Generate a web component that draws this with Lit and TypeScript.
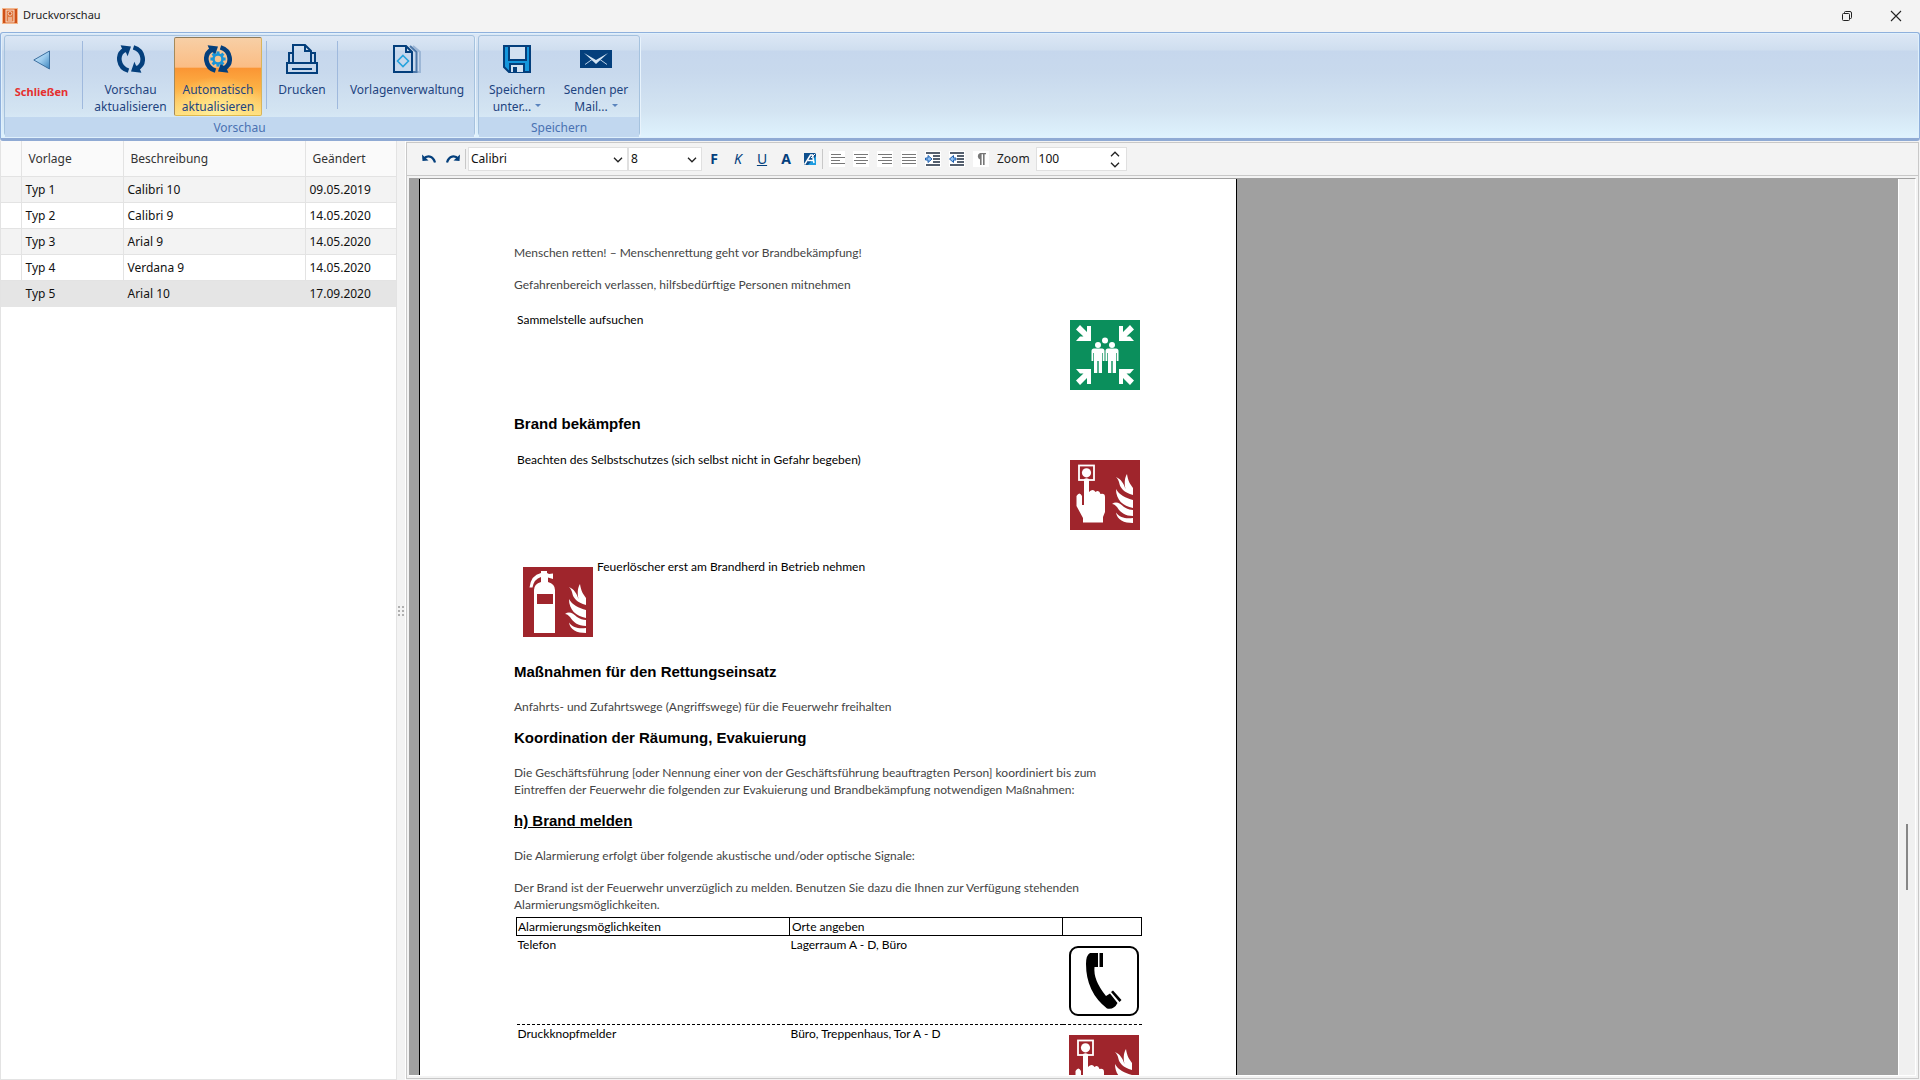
import { LitElement, html, css, svg, nothing, type TemplateResult } from "lit";
import { customElement, property, state } from "lit/decorators.js";
import { classMap } from "lit/directives/class-map.js";

/* ---------- Ribbon icons ---------- */

const refreshArrows = svg`
  <g fill="none" stroke="#043f7c" stroke-width="4.6">
    <path d="M11.5 25.6 C1 22.5 -1 9 8.2 4.6"/>
    <path d="M16.5 2.4 C27 5.500 29 19 19.800 23.400"/>
  </g>
  <path fill="#043f7c" d="M3.600 0.200 L14 1.400 L10.600 11.200 L9 7.400 L5.800 5.400 Z"/>
  <path fill="#043f7c" d="M24.400 27.800 L14 26.600 L17.400 16.800 L19 20.600 L22.200 22.600 Z"/>`;

const gearTeeth = [0, 45, 90, 135, 180, 225, 270, 315];

const iconClose = html`<svg width="18" height="20" viewBox="0 0 18 20" aria-hidden="true">
  <defs><linearGradient id="tri" x1="0" y1="0" x2="1" y2="1">
    <stop offset="0" stop-color="#d6ecfb"/><stop offset=".5" stop-color="#9ccbee"/><stop offset="1" stop-color="#3d85bd"/>
  </linearGradient></defs>
  <path d="M16.500 1 V19 L0.800 10 Z" fill="url(#tri)" stroke="#3c6f9f" stroke-width="1"/>
</svg>`;

const iconRefresh = html`<svg width="28" height="28" viewBox="0 0 28 28" aria-hidden="true">${refreshArrows}</svg>`;

const iconAuto = html`<svg width="28" height="28" viewBox="0 0 28 28" aria-hidden="true">
  ${refreshArrows}
  <circle cx="14" cy="14" r="4.500" fill="#f7c48d" stroke="#1b95d8" stroke-width="2.600"/>
  ${gearTeeth.map((a) => svg`<rect x="12.500" y="6.400" width="3" height="3" fill="#1b95d8" transform="rotate(${a} 14 14)"/>`)}
</svg>`;

const iconPrint = html`<svg width="32" height="30" viewBox="0 0 32 30" aria-hidden="true">
  <g fill="none" stroke="#043f7c" stroke-width="2">
    <path d="M1 19 H31 V29 H1 Z"/><path d="M6 25 H26"/>
    <path d="M7 19 V1 H19 L25 7 V19"/><path d="M19 1 V7 H25"/>
    <path d="M3 19 V9 H7 M29 19 V9 H25"/>
  </g>
</svg>`;

const iconTemplates = html`<svg width="28" height="28" viewBox="0 0 28 28" aria-hidden="true">
  <g fill="none" stroke-width="2">
    <path d="M20 1 L27 7 V27 H23" stroke="#9db7d6"/>
    <path d="M17 1 L23.500 7 V27 H19" stroke="#4e79aa"/>
    <path d="M1 1 H13 L19 7 V27 H1 Z" stroke="#043f7c"/>
    <path d="M13 1 V7 H19" stroke="#043f7c"/>
    <path d="M10 10.500 L15.500 16 L10 21.500 L4.500 16 Z" stroke="#27a3dd" stroke-width="1.600"/>
  </g>
</svg>`;

const iconSave = html`<svg width="28" height="28" viewBox="0 0 28 28" aria-hidden="true">
  <path d="M1 1 H27 V27 H6 L1 22 Z" fill="#1496dc" stroke="#043f7c" stroke-width="2"/>
  <rect x="6" y="1" width="17" height="14" fill="#d3e1f1" stroke="#043f7c" stroke-width="2"/>
  <path d="M7 27 V19 H21 V27" fill="#d3e1f1" stroke="#043f7c" stroke-width="2"/>
  <rect x="10" y="22" width="4" height="5" fill="#043f7c"/>
</svg>`;

const iconMail = html`<svg width="32" height="18" viewBox="0 0 32 18" aria-hidden="true">
  <rect width="32" height="18" fill="#043f7c"/>
  <path d="M4 3 L16 14 L28 3 L16 10 Z" fill="#d3e3f2"/>
  <path d="M5 14.500 L12 9.500 M27 14.500 L20 9.500" fill="none" stroke="#b8cfe6" stroke-width="1"/>
</svg>`;

/* ---------- Toolbar icons ---------- */

const iconUndo = html`<svg width="16" height="10" viewBox="0 0 16 10" aria-hidden="true">
  <path d="M2.500 5 C6 1 12 1.500 14 8.500" fill="none" stroke="#043f7c" stroke-width="2.200"/>
  <path d="M1 0.500 L1.500 7 L7.500 6.500 Z" fill="#043f7c"/>
</svg>`;
const iconRedo = html`<svg width="16" height="10" viewBox="0 0 16 10" aria-hidden="true">
  <path d="M13.500 5 C10 1 4 1.500 2 8.500" fill="none" stroke="#043f7c" stroke-width="2.200"/>
  <path d="M15 0.500 L14.500 7 L8.500 6.500 Z" fill="#043f7c"/>
</svg>`;
const iconHighlight = html`<svg width="12" height="12" viewBox="0 0 12 12" aria-hidden="true">
  <rect width="12" height="12" fill="#0d4f8e"/><path d="M12 3 V12 H4 Z" fill="#1c9ce0"/>
  <path d="M0.500 11.500 L6.500 2 H8.500 L10 10 M4 7.500 H9.500" fill="none" stroke="#fff" stroke-width="1.500"/>
  <path d="M7 5 L11.500 0.500" stroke="#fff" stroke-width="1"/>
</svg>`;

const lines = (rows: [number, number][]) => html`<svg width="16" height="16" viewBox="0 0 16 16" aria-hidden="true">
  <rect width="16" height="16" fill="#fff"/>
  ${rows.map(([x, w], i) => svg`<rect x=${x} y=${3 + i * 3} width=${w} height="1" fill="#777"/>`)}
</svg>`;
const iconLeft = lines([[2, 10], [2, 14], [2, 9], [2, 14]]);
const iconCenter = lines([[1, 14], [3, 10], [1, 14], [3, 10]]);
const iconRight = lines([[1, 14], [5, 10], [1, 14], [5, 10]]);
const iconJustify = lines([[1, 14], [1, 14], [1, 14], [1, 14]]);

const indent = (arrow: string) => html`<svg width="16" height="16" viewBox="0 0 16 16" aria-hidden="true">
  <rect width="16" height="16" fill="#fff"/>
  <path d="M1 2 H15 M8 5 H15 M8 8 H15 M8 11 H15 M1 14 H15" stroke="#1d2b3f" stroke-width="1.400"/>
  <path d=${arrow} fill="#8fc0f2" stroke="#1f5fae" stroke-width="1"/>
</svg>`;
const iconIndent = indent("M0.500 7 H3 V4.500 L7 8 L3 11.500 V9 H0.500 Z");
const iconOutdent = indent("M7 7 H4.500 V4.500 L0.500 8 L4.500 11.500 V9 H7 Z");
const iconPilcrow = html`<svg width="16" height="16" viewBox="0 0 16 16" aria-hidden="true">
  <rect width="16" height="16" fill="#fff"/>
  <path d="M7 8.500 A3.500 3.500 0 0 1 7 2 H13 V3.200 H11.600 V14 H10 V3.200 H8.600 V14 H7 Z" fill="#777"/>
</svg>`;
const chevronDown = html`<svg class="chevron" width="10" height="6" viewBox="0 0 10 6" aria-hidden="true">
  <path d="M1 0.800 L5 4.800 L9 0.800" fill="none" stroke="#222" stroke-width="1.300"/></svg>`;
const chevronUp = html`<svg width="10" height="6" viewBox="0 0 10 6" aria-hidden="true">
  <path d="M1 5.200 L5 1.200 L9 5.200" fill="none" stroke="#222" stroke-width="1.300"/></svg>`;

/* ---------- Safety signs ---------- */

const flames = svg`<g fill="#fff">
  <path d="M46 17 C51 19 54 24 55.500 29 C54 22 55 17 57 14 C58 21 60 24 63 28 V35 C54 33 50 27 49.500 24 C49 21 48 19 46 17 Z"/>
  <path d="M46 29 C49 35 56 38 63 40 V48 C53 46 46 40 46 29 Z"/>
  <path d="M42 44 C46 41 50 43 54 47 C57 49 60 50 63 50 V56 C55 56 50 52 47 47 C45 45 44 44 42 44 Z"/>
  <path d="M46 52.500 C50 58 56 59 63 58 V63 C54 63 47 60 46 52.500 Z"/>
</g>`;

const signAssembly = html`<svg class="sign" viewBox="0 0 70 70" role="img" aria-label="Sammelstelle">
  <rect width="70" height="70" fill="#0b8f5c"/>
  <g fill="#fff">
    ${[
      "",
      "translate(70 0) scale(-1 1)",
      "translate(0 70) scale(1 -1)",
      "translate(70 70) scale(-1 -1)",
    ].map((t) => svg`<path transform=${t} d="M10 5 L17 12 V6 H21 V21 H6 L10 16.500 H13.500 L6 9.500 Z"/>`)}
    <circle cx="35" cy="20.500" r="3"/>
    <circle cx="28" cy="25" r="3"/>
    <circle cx="42" cy="25" r="3"/>
    ${[28, 42].map((x) => svg`<path transform="translate(${x} 0)" d="M-4 28.500 H4 Q6.500 28.500 6.500 31 V41 H4.700 V33 H4 V53 H0.700 V41 H-0.700 V53 H-4 V33 H-4.700 V41 H-6.500 V31 Q-6.500 28.500 -4 28.500 Z"/>`)}
  </g>
</svg>`;

const signAlarm = html`<svg class="sign" viewBox="0 0 70 70" role="img" aria-label="Brandmelder">
  <rect width="70" height="70" fill="#9f252c"/>
  <rect x="9" y="5.500" width="15" height="14.500" fill="none" stroke="#fff" stroke-width="1.800"/>
  <circle cx="16.500" cy="12.800" r="4.600" fill="#fff"/>
  <path fill="#fff" d="M14 19 Q16.500 17.500 19 19 V32 Q23 28 25.500 32 Q29 29.500 30.500 34 Q35 33 35 37 V52 L33 57 V62.500 H13 V58 L6.500 46 V36 Q9.500 31 12 36 V45 H14 Z"/>
  ${flames}
</svg>`;

const signExtinguisher = html`<svg class="sign" viewBox="0 0 70 70" role="img" aria-label="Feuerlöscher">
  <rect width="70" height="70" fill="#9f252c"/>
  <path fill="#fff" d="M18 4 H24 V6 L26 7 L30 6.500 V12 L25 10.500 V15 Q32 17 32 23 V66 H11 V23 Q11 17 18 15 V10 Q11 12 9.500 20.500 H6.500 Q8 8 18 6 Z"/>
  <rect x="14" y="27" width="16" height="10" fill="#9f252c"/>
  <g transform="translate(0 3)">${flames}</g>
</svg>`;

const signPhone = html`<svg class="sign" viewBox="0 0 70 70" role="img" aria-label="Telefon">
  <rect x="1" y="1" width="68" height="68" rx="8" fill="#fff" stroke="#000" stroke-width="2"/>
  <path d="M21 7 H29 V21 H25.500 Q24 34 37 50 L41 47.500 L48.500 57 Q45 64 38 62.500 Q17 46 17 18 Q17 9 21 7 Z"/>
  <path d="M30.500 7 H34 V21 H30.500 Z M42 46 L44 44.500 L52.500 54 L50.500 56 Z"/>
</svg>`;

/* ---------- Ribbon button ---------- */

@customElement("ribbon-button")
class RibbonButton extends LitElement {
  @property({ attribute: false }) icon?: TemplateResult;
  @property({ attribute: false }) lines: string[] = [];
  @property({ type: Boolean }) active = false;
  @property({ type: Boolean }) danger = false;
  @property({ type: Boolean }) menu = false;

  static styles = css`
    :host { display: flex; }
    .button {
      display: flex; flex: 1; flex-direction: column; align-items: center;
      padding: 0; margin: 0; border: 1px solid transparent; border-radius: 2px;
      background: none; color: #1e4480;
      font: 12px/17px "Noto Sans", "Open Sans", sans-serif; white-space: nowrap;
    }
    .icon { display: flex; height: 41px; margin-bottom: 2px; align-items: center; justify-content: center; }
    .icon.tall { height: 43px; }
    .line { display: block; }
    .active {
      border-color: #8e7b5a #d9b45a #e0b94d #a58a5b;
      background:
        radial-gradient(ellipse 60% 50% at 50% 100%, #fff2a2 0%, rgba(255, 226, 130, 0.700) 50%, rgba(255, 200, 90, 0) 100%),
        linear-gradient(#f7cfa6 0, #fbbd84 38%, #fa9534 39%, #fdb145 65%, #fee085 100%);
    }
    .danger { color: #e5302f; font-weight: 700; font-size: 11px; }
    .caret {
      display: inline-block; margin: 0 0 4px 4px;
      border: 3px solid transparent; border-top-color: #5b84bd; border-bottom: 0;
    }
  `;

  render() {
    const last = this.lines.length - 1;
    return html`<button type="button" class=${classMap({ button: true, active: this.active, danger: this.danger })}>
      <span class=${classMap({ icon: true, tall: this.danger })}>${this.icon}</span>
      ${this.lines.map((l, i) => html`<span class="line">${l}${this.menu && i === last ? html`<span class="caret"></span>` : nothing}</span>`)}
    </button>`;
  }
}
void RibbonButton;

/* ---------- Document ---------- */

@customElement("document-page")
class DocumentPage extends LitElement {
  static styles = css`
    :host {
      display: block; box-sizing: border-box; width: 818px; flex: none;
      padding: 65px 94px; background: #fff; border: solid #000; border-width: 0 1px;
      font: 12px/16px Lato, "Open Sans", sans-serif; color: #000;
    }
    p { margin: 0 0 15px; line-height: 17px; color: #444; }
    .tight { margin-bottom: 4px; }
    h2 { margin: 15px 0 18px; font: 700 15px/16px "Liberation Sans", Arial, sans-serif; }
    .underlined { text-decoration: underline; }
    .measure { display: flex; justify-content: space-between; margin: 19px 0 16px; padding: 0 2px 0 3px; height: 88px; }
    h2 + .measure { margin-top: 20px; }
    .measure.leading { justify-content: flex-start; padding-left: 9px; gap: 4px; margin-bottom: 17px; }
    .sign { display: block; width: 70px; height: 70px; margin: 8px 0 0; }
    .alarms { width: calc(100% - 2px); border-collapse: collapse; table-layout: fixed; margin-left: 2px; }
    .alarms th, .alarms td { box-sizing: border-box; }
    .alarms th { height: 18px; padding: 0 2px; border: 1px solid #000; font-weight: 400; text-align: left; line-height: 16px; }
    .alarms th:first-child { padding-left: 1px; }
    .alarms td { height: 89px; padding: 1px 1px 0; vertical-align: top; border-bottom: 1px dashed #000; }
    .place { width: 273px; }
    .alarms .sign { margin: 9px 0 0 5px; }
  `;

  render() {
    return html`
      <p>Menschen retten! – Menschenrettung geht vor Brandbekämpfung!</p>
      <p>Gefahrenbereich verlassen, hilfsbedürftige Personen mitnehmen</p>
      <div class="measure"><span>Sammelstelle aufsuchen</span>${signAssembly}</div>
      <h2>Brand bekämpfen</h2>
      <div class="measure"><span>Beachten des Selbstschutzes (sich selbst nicht in Gefahr begeben)</span>${signAlarm}</div>
      <div class="measure leading">${signExtinguisher}<span>Feuerlöscher erst am Brandherd in Betrieb nehmen</span></div>
      <h2>Maßnahmen für den Rettungseinsatz</h2>
      <p>Anfahrts- und Zufahrtswege (Angriffswege) für die Feuerwehr freihalten</p>
      <h2>Koordination der Räumung, Evakuierung</h2>
      <p>Die Geschäftsführung [oder Nennung einer von der Geschäftsführung beauftragten Person] koordiniert bis zum
        Eintreffen der Feuerwehr die folgenden zur Evakuierung und Brandbekämpfung notwendigen Maßnahmen:</p>
      <h2 class="underlined">h) Brand melden</h2>
      <p>Die Alarmierung erfolgt über folgende akustische und/oder optische Signale:</p>
      <p class="tight">Der Brand ist der Feuerwehr unverzüglich zu melden. Benutzen Sie dazu die Ihnen zur Verfügung stehenden
        Alarmierungsmöglichkeiten.</p>
      <table class="alarms">
        <thead><tr><th class="place">Alarmierungsmöglichkeiten</th><th class="place">Orte angeben</th><th></th></tr></thead>
        <tbody>
          <tr><td>Telefon</td><td>Lagerraum A - D, Büro</td><td>${signPhone}</td></tr>
          <tr><td>Druckknopfmelder</td><td>Büro, Treppenhaus, Tor A - D</td><td>${signAlarm}</td></tr>
        </tbody>
      </table>`;
  }
}
void DocumentPage;

/* ---------- Application ---------- */

interface Template { name: string; description: string; changed: string; }

const templates: Template[] = [
  { name: "Typ 1", description: "Calibri 10", changed: "09.05.2019" },
  { name: "Typ 2", description: "Calibri 9", changed: "14.05.2020" },
  { name: "Typ 3", description: "Arial 9", changed: "14.05.2020" },
  { name: "Typ 4", description: "Verdana 9", changed: "14.05.2020" },
  { name: "Typ 5", description: "Arial 10", changed: "17.09.2020" },
];

@customElement("app-root")
class AppRoot extends LitElement {
  @state() private selected = 4;

  static styles = css`
    :host {
      display: flex; flex-direction: column; height: 100vh; overflow: hidden;
      background: #f3f3f3; color: #222; font: 12px/16px "Noto Sans", "Open Sans", sans-serif;
    }
    * { box-sizing: border-box; }
    button { margin: 0; padding: 0; border: 0; background: none; color: inherit; font: inherit; }
    svg { display: block; }

    .titlebar { display: flex; align-items: center; height: 32px; flex: none; padding-left: 2px; }
    .title { flex: 1; margin: 0 0 2px 5px; font-size: 11px; font-weight: 400; }
    .window-button { display: flex; width: 49px; height: 32px; align-items: center; justify-content: center; }

    .ribbon {
      display: flex; gap: 3px; height: 109px; flex: none; padding: 2px 3px;
      border: 1px solid #8fb0dc; border-width: 1px 1px 3px; border-bottom-color: #8faad4;
      border-radius: 3px;
      background: linear-gradient(#dde8f6 0, #cfdeef 17px, #c6d7ed 18px, #c8d9ed 40px, #d3e4f2 78px, #dff3fe 100%);
      box-shadow: inset 0 0 0 1px #dff0fc;
    }
    .group {
      display: flex; flex-direction: column; border: 1px solid #a5c2de; border-radius: 3px;
      box-shadow: 1px 1px 0 #e8f3fc;
    }
    .group-body { display: flex; flex: 1; padding: 1px 2px 1px 0; }
    .group-title { height: 20px; padding-top: 1px; background: #c1d7ef; color: #4a72b2; text-align: center; line-height: 20px; }
    .divider { width: 1px; height: 68px; margin: 4px 4px 0; background: #9fb9dd; }
    .w-close { width: 73px; } .w-refresh { width: 87px; } .w-auto { width: 88px; }
    .w-print { width: 62px; } .w-templates { width: 130px; } .w-save { width: 76px; } .w-mail { width: 82px; }

    .workspace { display: grid; grid-template-columns: 397px 9px minmax(0, 1fr); flex: 1; min-height: 0; padding-right: 1px; }
    .list { background: #fff; border: 1px solid #e3e3e3; border-top: 0; }
    .templates { width: 100%; border-collapse: collapse; table-layout: fixed; }
    .templates th { height: 35px; padding: 2px 0 0 7px; background: #fafafa; text-align: left; font-weight: 400; color: #333; }
    .templates th, .templates td { border: solid #e3e3e3; border-width: 0 1px 1px 0; }
    .templates th:last-child, .templates td:last-child { border-right: 0; }
    .templates td { height: 26px; padding: 1px 0 0 4px; color: #111; }
    .templates tr:nth-child(odd) td { background: #f3f3f3; }
    .templates tr.selected td { background: #e5e5e5; border-color: #e5e5e5; }
    .c-mark { width: 20px; } .c-name { width: 102px; } .c-desc { width: 182px; }

    .splitter { display: flex; align-items: center; justify-content: center; border-right: 1px solid #fff; }
    .grip { display: grid; grid-template-columns: 2px 2px; gap: 2px; }
    .grip i { width: 2px; height: 2px; background: #b0b0b0; }

    .editor { display: flex; flex-direction: column; min-height: 0; margin: 1px 0 1px; border: 1px solid #c8c8c8; }
    .toolbar { display: flex; align-items: center; height: 33px; flex: none; padding-left: 10px; border-bottom: 1px solid #c8c8c8; }
    .tool { display: flex; width: 24px; height: 24px; align-items: center; justify-content: center; color: #043f7c; font-size: 14px; }
    .bold { font-weight: 700; } .italic { font-style: italic; } .underline { text-decoration: underline; }
    .bar { width: 1px; height: 20px; background: #c8c8c8; margin-right: 2px; }
    .field { position: relative; display: flex; height: 24px; background: #fff; border: 1px solid #e0e0e0; }
    .field select, .field input {
      width: 100%; margin: 0; padding: 0 0 0 2px; border: 0; background: none; appearance: none;
      color: #111; font: inherit; outline: 0;
    }
    .field input::-webkit-inner-spin-button { display: none; }
    .field .chevron { position: absolute; right: 4px; top: 9px; pointer-events: none; }
    .family { width: 160px; } .size { width: 74px; }
    .zoom-label { margin: 0 6px 0 4px; }
    .zoom { width: 91px; }
    .steps { display: flex; flex-direction: column; justify-content: space-around; padding-right: 6px; }
    .steps button { display: flex; }
    .steps .chevron { position: static; }

    .canvas { display: flex; flex: 1; min-height: 0; margin: 2px; border: solid #fff; border-width: 0 1px 1px 0; border-top: 1px solid #a0a0a0; }
    .viewport { display: flex; flex: 1; min-width: 0; overflow: hidden; align-items: flex-start; background: #a0a0a0; padding-left: 10px; }
    .scrollbar { display: grid; grid-template-rows: 646fr 66fr 185fr; justify-content: center; width: 17px; border-left: 1px solid #fff; background: #f0f0f0; }
    .thumb { grid-row: 2; width: 2px; background: #868686; }
  `;

  private tool(label: string, content: unknown, extra = "") {
    return html`<button type="button" class="tool ${extra}" aria-label=${label}>${content}</button>`;
  }

  render() {
    return html`
      <header class="titlebar">
        <svg width="16" height="16" viewBox="0 0 16 16" aria-hidden="true">
          <rect width="16" height="16" fill="#f3b78c"/><rect x="1" y="1" width="14" height="14" fill="#cf5118"/>
          <rect x="4" y="2" width="8" height="12" fill="#e07a42" stroke="#fbe3d0" stroke-width="1"/>
          <circle cx="8" cy="5.500" r="1.800" fill="#cf5118" stroke="#fbe3d0" stroke-width=".8"/>
          <path d="M6 10 H10 M6 12 H10" stroke="#fbe3d0" stroke-width="1"/>
        </svg>
        <h1 class="title">Druckvorschau</h1>
        <button type="button" class="window-button" aria-label="Wiederherstellen">
          <svg width="10" height="10" viewBox="0 0 10 10" fill="none" stroke="#222"><rect x=".5" y="2.500" width="7" height="7" rx="1"/><path d="M2.500 2.500 V1.500 Q2.500 .5 3.500 .5 H8 Q9.500 .5 9.500 2 V6.500 Q9.500 7.500 8.500 7.500 H7.500"/></svg>
        </button>
        <button type="button" class="window-button" aria-label="Schließen">
          <svg width="12" height="12" viewBox="0 0 12 12" stroke="#222" stroke-width="1.100"><path d="M1 1 L11 11 M11 1 L1 11"/></svg>
        </button>
      </header>

      <nav class="ribbon" aria-label="Menüband">
        <section class="group">
          <div class="group-body">
            <ribbon-button class="w-close" danger .icon=${iconClose} .lines=${["Schließen"]}></ribbon-button>
            <span class="divider"></span>
            <ribbon-button class="w-refresh" .icon=${iconRefresh} .lines=${["Vorschau", "aktualisieren"]}></ribbon-button>
            <ribbon-button class="w-auto" active .icon=${iconAuto} .lines=${["Automatisch", "aktualisieren"]}></ribbon-button>
            <span class="divider"></span>
            <ribbon-button class="w-print" .icon=${iconPrint} .lines=${["Drucken"]}></ribbon-button>
            <span class="divider"></span>
            <ribbon-button class="w-templates" .icon=${iconTemplates} .lines=${["Vorlagenverwaltung"]}></ribbon-button>
          </div>
          <div class="group-title">Vorschau</div>
        </section>
        <section class="group">
          <div class="group-body">
            <ribbon-button class="w-save" menu .icon=${iconSave} .lines=${["Speichern", "unter..."]}></ribbon-button>
            <ribbon-button class="w-mail" menu .icon=${iconMail} .lines=${["Senden per", "Mail..."]}></ribbon-button>
          </div>
          <div class="group-title">Speichern</div>
        </section>
      </nav>

      <main class="workspace">
        <section class="list">
          <table class="templates">
            <thead><tr><th class="c-mark"></th><th class="c-name">Vorlage</th><th class="c-desc">Beschreibung</th><th>Geändert</th></tr></thead>
            <tbody>
              ${templates.map((t, i) => html`<tr class=${classMap({ selected: i === this.selected })} @click=${() => (this.selected = i)}>
                <td></td><td>${t.name}</td><td>${t.description}</td><td>${t.changed}</td></tr>`)}
            </tbody>
          </table>
        </section>
        <div class="splitter"><span class="grip"><i></i><i></i><i></i><i></i><i></i><i></i></span></div>
        <section class="editor">
          <div class="toolbar" role="toolbar">
            ${this.tool("Rückgängig", iconUndo)}${this.tool("Wiederholen", iconRedo)}
            <span class="bar"></span>
            <div class="field family">
              <select aria-label="Schriftart"><option>Calibri</option><option>Arial</option><option>Verdana</option></select>${chevronDown}
            </div>
            <div class="field size">
              <select aria-label="Schriftgröße"><option>8</option><option>9</option><option>10</option></select>${chevronDown}
            </div>
            ${this.tool("Fett", "F", "bold")}${this.tool("Kursiv", "K", "italic")}${this.tool("Unterstrichen", "U", "underline")}
            ${this.tool("Schriftfarbe", "A", "bold")}${this.tool("Hervorheben", iconHighlight)}
            <span class="bar"></span>
            ${this.tool("Linksbündig", iconLeft)}${this.tool("Zentriert", iconCenter)}${this.tool("Rechtsbündig", iconRight)}
            ${this.tool("Blocksatz", iconJustify)}${this.tool("Einzug vergrößern", iconIndent)}${this.tool("Einzug verkleinern", iconOutdent)}
            ${this.tool("Absatzmarken", iconPilcrow)}
            <label class="zoom-label" for="zoom">Zoom</label>
            <div class="field zoom">
              <input id="zoom" type="number" value="100">
              <div class="steps">
                <button type="button" aria-label="Vergrößern">${chevronUp}</button>
                <button type="button" aria-label="Verkleinern">${chevronDown}</button>
              </div>
            </div>
          </div>
          <div class="canvas">
            <div class="viewport"><document-page></document-page></div>
            <div class="scrollbar"><span class="thumb"></span></div>
          </div>
        </section>
      </main>`;
  }
}
void AppRoot;
